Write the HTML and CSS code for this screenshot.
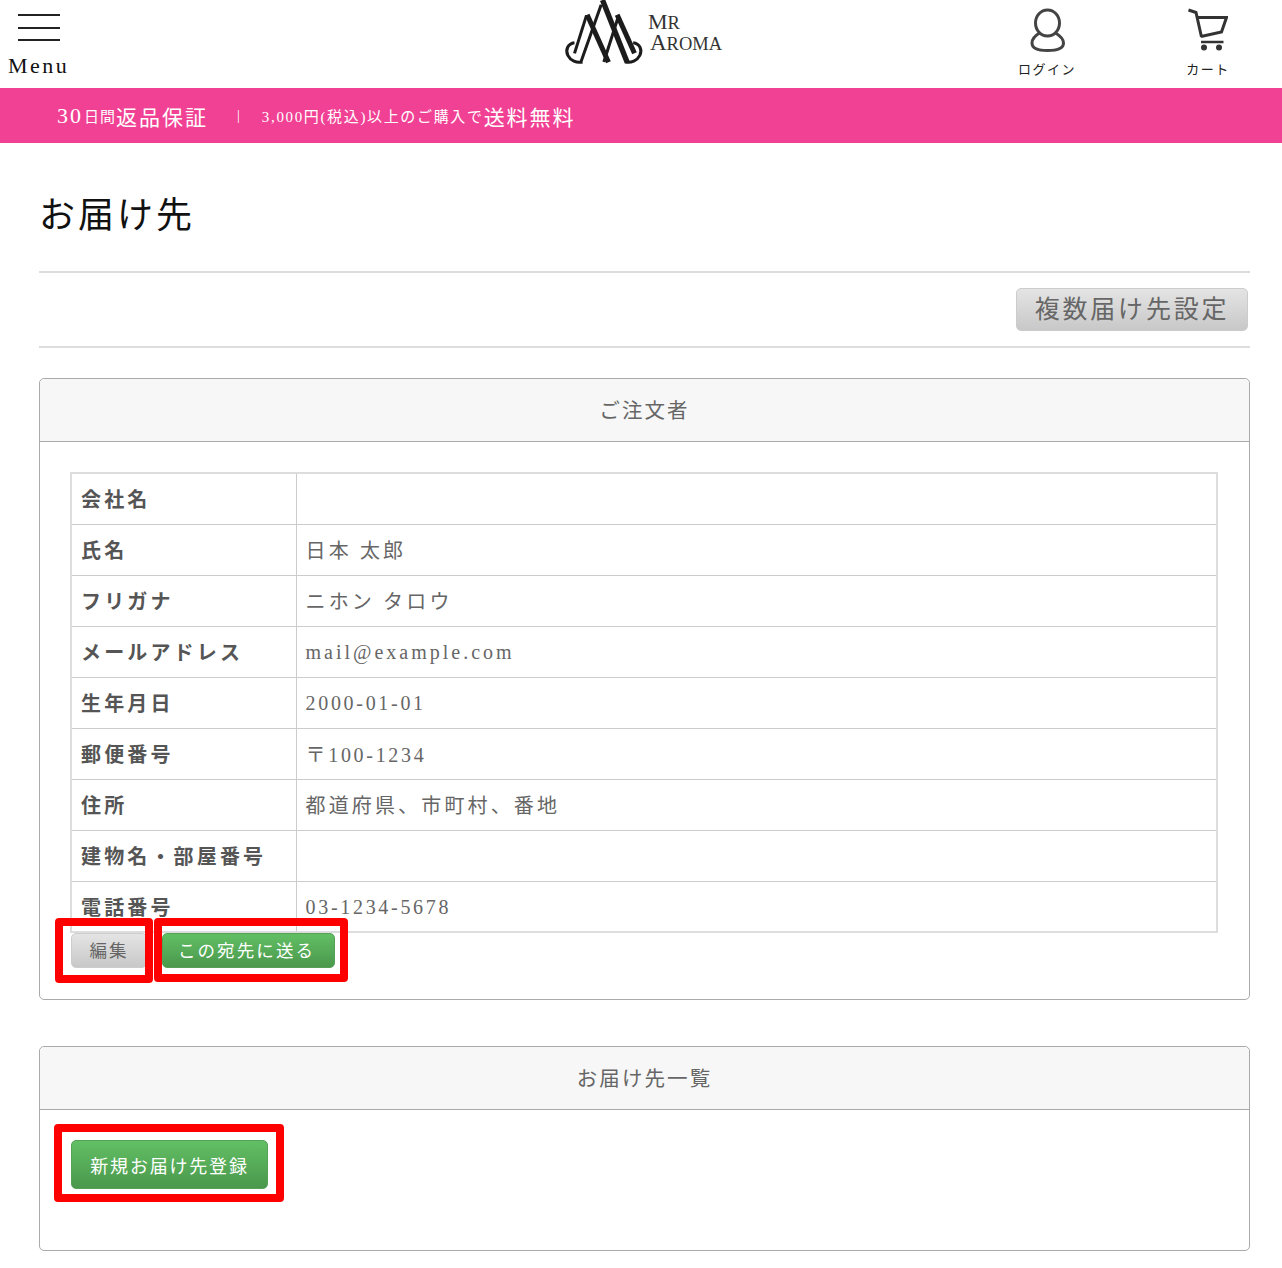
FILE: index.html
```html
<!DOCTYPE html>
<html lang="ja">
<head>
    <meta charset="UTF-8">
    <title>お届け先</title>
    <link rel="stylesheet" href="styles.css">
</head>
<body>
<header class="header">
    <div class="menu">
        <div class="burger"><span></span><span></span><span></span></div>
        <div class="menu-label">Menu</div>
    </div>
    <div class="logo">
        <svg class="logo-mark" viewBox="70 0 245 195">
            <g fill="none" stroke="#1c1c1c" stroke-linecap="butt">
                <path d="M188 0 L262 187" stroke-width="16"/>
                <path d="M184 14 L124 184" stroke-width="9"/>
                <path d="M142 44 L206 187" stroke-width="15"/>
                <path d="M140 46 L104 160" stroke-width="9"/>
                <path d="M232 44 L284 160" stroke-width="15"/>
                <path d="M236 48 L192 186" stroke-width="9"/>
                <path d="M104 128 C84 130 76 150 84 166 C92 182 110 190 128 186" stroke-width="9"/>
                <path d="M280 128 C300 130 308 150 300 166 C292 182 274 190 256 186" stroke-width="9"/>
            </g>
        </svg>
        <div class="logo-text">
            <div class="logo-mr">M<small>R</small></div>
            <div class="logo-aroma">A<small>ROMA</small></div>
        </div>
    </div>
    <nav class="nav">
        <a class="nav-item">
            <svg class="nav-icon" viewBox="0 0 40 44">
                <ellipse cx="20.5" cy="15" rx="12" ry="13" fill="none" stroke="#444" stroke-width="3"/>
                <path d="M12.5 25 C7.5 28 5 31 5 35 C5 40 10.500 42.500 20.500 42.500 C30.500 42.500 36.500 40 36.500 35 C36.500 31 33.500 28 28.500 25" fill="none" stroke="#444" stroke-width="3"/>
            </svg>
            <span class="nav-label">ログイン</span>
        </a>
        <a class="nav-item">
            <svg class="nav-icon" viewBox="0 0 40 44">
                <g fill="none" stroke="#333" stroke-width="3">
                    <path d="M0.5 2 L8 4.5 L13.5 29"/>
                    <path d="M9 9.5 H38.5 L33.5 24 L13 28.5"/>
                    <path d="M13 34 H35.5" stroke-width="2.5"/>
                </g>
                <circle cx="16" cy="39.5" r="3" fill="#333"/>
                <circle cx="31" cy="39.5" r="3" fill="#333"/>
            </svg>
            <span class="nav-label">カート</span>
        </a>
    </nav>
</header>

<div class="banner">
    <span class="b-num">30</span><span class="b-small">日間</span><span class="b-big">返品保証</span>
    <span class="b-sep">|</span>
    <span class="b-mid">3,000円(税込)以上のご購入で</span><span class="b-big">送料無料</span>
</div>

<main class="main">
    <h1 class="title">お届け先</h1>
    <div class="toolbar">
        <a class="btn btn-gray btn-large">複数届け先設定</a>
    </div>

    <section class="panel">
        <h2 class="panel-head">ご注文者</h2>
        <div class="panel-body">
            <table class="info">
                <tr><th>会社名</th><td></td></tr>
                <tr><th>氏名</th><td>日本 太郎</td></tr>
                <tr><th>フリガナ</th><td>ニホン タロウ</td></tr>
                <tr><th>メールアドレス</th><td class="latin">mail@example.com</td></tr>
                <tr><th>生年月日</th><td class="latin num">2000-01-01</td></tr>
                <tr><th>郵便番号</th><td class="num">〒100-1234</td></tr>
                <tr><th>住所</th><td>都道府県、市町村、番地</td></tr>
                <tr><th>建物名・部屋番号</th><td></td></tr>
                <tr><th>電話番号</th><td class="latin num">03-1234-5678</td></tr>
            </table>
            <div class="actions">
                <a class="btn btn-gray btn-small">編集<i class="mark mark-edit"></i></a>
                <a class="btn btn-green btn-small btn-send">この宛先に送る<i class="mark mark-send"></i></a>
            </div>
        </div>
    </section>

    <section class="panel panel-list">
        <h2 class="panel-head">お届け先一覧</h2>
        <div class="panel-body panel-body-list">
            <a class="btn btn-green btn-new">新規お届け先登録<i class="mark mark-new"></i></a>
        </div>
    </section>
</main>
</body>
</html>
```

FILE: styles.css
```css
*{
    box-sizing: border-box;
}
body{
    margin: 0;
    color: #555;
    background: #fff;
    font-family: "Liberation Serif", "Noto Sans CJK JP", serif;
}
.header{
    height: 88px;
    display: grid;
    grid-template-columns: 1fr auto 1fr;
}
.menu{
    padding: 14px 0 0 8px;
}
.burger{
    width: 42px;
    margin-left: 10px;
    display: flex;
    flex-direction: column;
    gap: 10.5px;
}
.burger span{
    height: 2px;
    background: #222;
}
.menu-label{
    margin-top: 12px;
    font-size: 22px;
    line-height: 26px;
    letter-spacing: 2.5px;
    color: #111;
}
.logo{
    display: flex;
    margin-left: 3px;
}
.logo-mark{
    width: 82px;
    height: 65px;
}
.logo-text{
    margin: 12px 0 0 2px;
    color: #333;
}
.logo-mr{
    margin-left: 1px;
    font-size: 22px;
    line-height: 20px;
}
.logo-aroma{
    font-size: 23px;
    line-height: 20px;
    margin-left: 3px;
}
.logo-mr small,.logo-aroma small{
    font-size: 18.5px;
}
.nav{
    display: flex;
    justify-content: flex-end;
    gap: 61px;
    padding: 8px 24px 0 0;
}
.nav-item{
    width: 100px;
    display: flex;
    flex-direction: column;
    align-items: center;
}
.nav-icon{
    width: 40px;
    height: 44px;
}
.nav-label{
    margin-top: 8px;
    font-size: 13px;
    line-height: 20px;
    letter-spacing: 1.5px;
    color: #222;
}
.banner{
    height: 55px;
    padding-left: 57px;
    display: flex;
    align-items: center;
    background: #f14194;
    color: #fff;
    letter-spacing: 2px;
    white-space: nowrap;
}
.b-big{
    font-size: 21px;
}
.b-num{
    font-size: 22px;
}
.b-small{
    margin-left: 1px;
    font-size: 15px;
    letter-spacing: 1px;
}
.b-mid{
    font-size: 15px;
    letter-spacing: 1.65px;
}
.b-sep{
    margin: 0 20px 0 29px;
    font-size: 14px;
}
.main{
    margin-left: 39px;
    width: 1211px;
    padding-bottom: 18px;
}
.title{
    margin: 0;
    height: 130px;
    padding-top: 48px;
    border-bottom: 2px solid #ddd;
    font-size: 36px;
    font-weight: normal;
    line-height: 50px;
    letter-spacing: 3px;
    color: #111;
}
.toolbar{
    height: 75px;
    padding: 15px 2px 0 0;
    display: flex;
    justify-content: flex-end;
    align-items: flex-start;
    border-bottom: 2px solid #ddd;
}
.btn{
    position: relative;
    display: inline-flex;
    align-items: center;
    justify-content: center;
    border-radius: 5px;
    white-space: nowrap;
}
.btn-gray{
    color: #666;
    border: 1px solid #ccc;
    background: linear-gradient(#e4e4e4, #c8c8c8);
}
.btn-green{
    color: #fff;
    border: 1px solid #55a257;
    background: linear-gradient(#62bf64, #4a984c);
}
.btn-large{
    width: 232px;
    height: 43px;
    padding-bottom: 5px;
    font-size: 25px;
    letter-spacing: 2.8px;
}
.btn-small{
    height: 35px;
    padding-bottom: 2px;
    font-size: 17.5px;
    letter-spacing: 2.1px;
}
.btn-new{
    width: 197px;
    height: 49px;
    font-size: 18px;
    letter-spacing: 1.8px;
}
.panel{
    margin-top: 30px;
    border: 1px solid #aaa;
    border-radius: 5px;
}
.panel-list{
    margin-top: 46px;
}
.panel-head{
    margin: 0;
    height: 63px;
    padding-top: 2px;
    background: #f7f7f7;
    border-bottom: 1px solid #aaa;
    border-radius: 5px 5px 0 0;
    font-size: 20.5px;
    font-weight: normal;
    line-height: 60px;
    letter-spacing: 2.1px;
    text-align: center;
    color: #666;
}
.panel-body{
    padding: 31px 31px 31px 31px;
}
.panel-body-list{
    padding-top: 30px;
    padding-bottom: 61px;
}
.info{
    width: 1148px;
    margin: -1px 0 0 -1px;
    border-collapse: collapse;
    border: 2px solid #ddd;
    font-size: 20px;
    letter-spacing: 3.15px;
}
.info th,.info td{
    height: 51px;
    padding: 0 9px;
    border: 1px solid #ccc;
    text-align: left;
    color: #666;
}
.info th{
    width: 225px;
    color: #555;
}
.info .latin{
    padding-top: 2px;
    letter-spacing: 3px;
}
.info .num{
    letter-spacing: 2.7px;
}
.actions{
    display: flex;
    gap: 16px;
}
.actions .btn-gray{
    width: 76px;
}
.actions .btn-green{
    width: 173px;
    margin-left: -1px;
}
.btn-send{
    padding-right: 4px;
}
.mark{
    position: absolute;
    border: 8px solid #f00;
    border-radius: 4px;
}
.mark-edit{
    top: -16px;
    bottom: -16px;
    left: -17px;
    right: -7px;
}
.mark-send{
    top: -16px;
    bottom: -15px;
    left: -9px;
    right: -14px;
}
.mark-new{
    top: -17px;
    bottom: -14px;
    left: -18px;
    right: -17px;
}
```
